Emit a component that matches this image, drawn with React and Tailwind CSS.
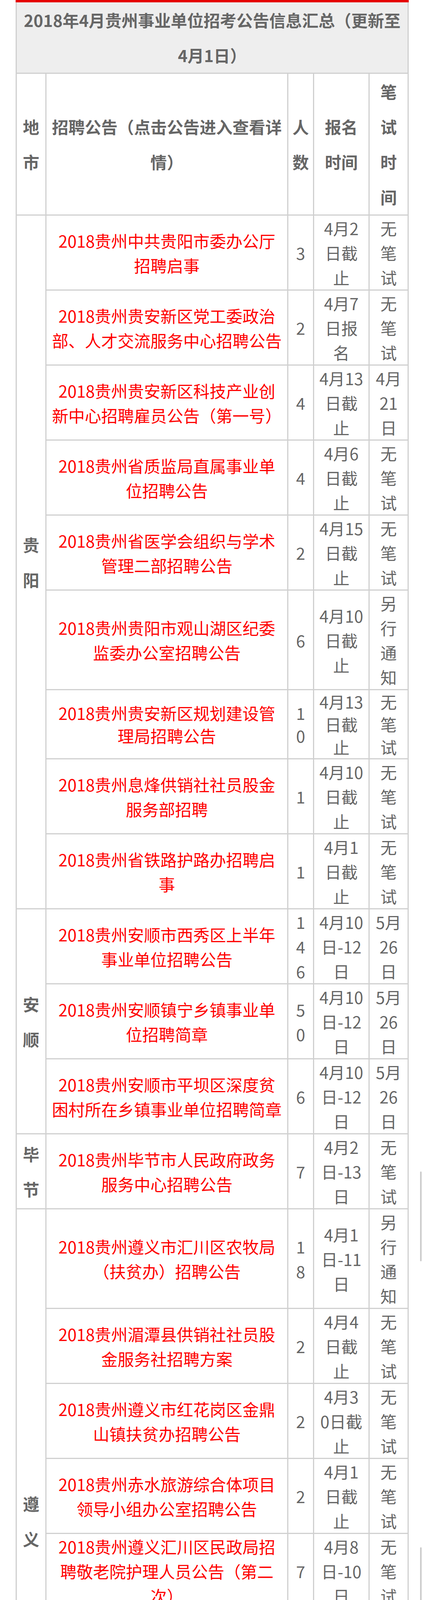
import React from "react";

// 各地区招聘公告（按截图中的换行写好）
const groups = [
  {
    region: "贵\n阳",
    rows: [
      { title: "2018贵州中共贵阳市委办公厅\n招聘启事", num: "3", date: "4月2\n日截\n止" },
      { title: "2018贵州贵安新区党工委政治\n部、人才交流服务中心招聘公告", num: "2", date: "4月7\n日报\n名" },
      { title: "2018贵州贵安新区科技产业创\n新中心招聘雇员公告（第一号）", num: "4", date: "4月13\n日截\n止", exam: "4月\n21\n日" },
      { title: "2018贵州省质监局直属事业单\n位招聘公告", num: "4", date: "4月6\n日截\n止" },
      { title: "2018贵州省医学会组织与学术\n管理二部招聘公告", num: "2", date: "4月15\n日截\n止" },
      { title: "2018贵州贵阳市观山湖区纪委\n监委办公室招聘公告", num: "6", date: "4月10\n日截\n止", exam: "另\n行\n通\n知" },
      { title: "2018贵州贵安新区规划建设管\n理局招聘公告", num: "1\n0", date: "4月13\n日截\n止", lh: "leading-[58px]" },
      { title: "2018贵州息烽供销社社员股金\n服务部招聘", num: "1", date: "4月10\n日截\n止" },
      { title: "2018贵州省铁路护路办招聘启\n事", num: "1", date: "4月1\n日截\n止" },
    ],
  },
  {
    region: "安\n顺",
    rows: [
      { title: "2018贵州安顺市西秀区上半年\n事业单位招聘公告", num: "1\n4\n6", date: "4月10\n日-12\n日", exam: "5月\n26\n日" },
      { title: "2018贵州安顺镇宁乡镇事业单\n位招聘简章", num: "5\n0", date: "4月10\n日-12\n日", exam: "5月\n26\n日" },
      { title: "2018贵州安顺市平坝区深度贫\n困村所在乡镇事业单位招聘简章", num: "6", date: "4月10\n日-12\n日", exam: "5月\n26\n日" },
    ],
  },
  {
    region: "毕\n节",
    rows: [
      { title: "2018贵州毕节市人民政府政务\n服务中心招聘公告", num: "7", date: "4月2\n日-13\n日" },
    ],
  },
  {
    region: "遵\n义",
    rows: [
      { title: "2018贵州遵义市汇川区农牧局\n（扶贫办）招聘公告", num: "1\n8", date: "4月1\n日-11\n日", exam: "另\n行\n通\n知" },
      { title: "2018贵州湄潭县供销社社员股\n金服务社招聘方案", num: "2", date: "4月4\n日截\n止" },
      { title: "2018贵州遵义市红花岗区金鼎\n山镇扶贫办招聘公告", num: "2", date: "4月3\n0日截\n止" },
      { title: "2018贵州赤水旅游综合体项目\n领导小组办公室招聘公告", num: "2", date: "4月1\n日截\n止" },
      { title: "2018贵州遵义汇川区民政局招\n聘敬老院护理人员公告（第二\n次）", num: "7", date: "4月8\n日-10\n日" },
      { title: "2018贵州遵义绥阳县电视台招\n聘简章", num: "2", date: "4月9\n日-12\n日" },
      { title: "2018贵州省产品质量监督检验\n院仁怀分院招考方案", num: "1", date: "4月4\n日截\n止", exam: "4月\n6日" },
      { title: "2018贵州遵义师范学院招聘简\n章", num: "5\n7", date: "全年\n有效" },
    ],
  },
  {
    region: "铜\n仁",
    rows: [
      { title: "2018贵州石阡县中坝街道招聘\n公益性岗位方案", num: "2", date: "4月1\n日报\n名" },
      { title: "2018贵州玉屏侗族自治县两违\n整治办公室招聘公告", num: "1", date: "4月3\n日截\n止" },
      { title: "2018贵州玉屏侗族自治县司法\n局招聘公告", num: "3", date: "4月21\n日截\n止" },
      { title: "2018贵州德江县委德江县人民\n政府招聘公告", num: "1\n0", date: "4月10\n日截\n止" },
      { title: "2018贵州铜仁市碧江区城乡消\n费合作社招聘", num: "若\n干", date: "4月2\n0日截\n止" },
      { title: "2018贵州铜仁市碧江区事业单\n位招聘（引进）人才简章", num: "7\n8", date: "4月10\n日截\n止" },
    ],
  },
  {
    region: "六\n盘\n水",
    rows: [
      { title: "2018贵州六盘水市钟山区招聘\n公告", num: "2", date: "4月5\n日截\n止" },
    ],
  },
  {
    region: "黔\n南\n州",
    rows: [
      { title: "2018贵州平塘县塘招聘村级文\n书简章", num: "1\n0", date: "4月1\n日截\n止", exam: "4月\n15\n日", lh: "leading-[61px]" },
      { title: "2018贵州都匀市住房和城乡建\n设局招聘启事", num: "2", date: "4月10\n日截\n止" },
    ],
  },
  {
    region: "黔\n东\n南",
    rows: [
      { title: "2018贵州从江县招聘扶贫工作\n人员方案", num: "1\n0\n0", date: "4月8\n日-13\n日" },
    ],
  },
];

const cell = "border-[3px] border-[#d0d0d0] p-0 text-center align-middle whitespace-pre";
const head = `${cell} font-bold leading-[90px] text-[#666]`;

const App = () => {
  return (
    <div className="relative bg-white w-[1080px] font-['Noto_Sans_CJK_SC',sans-serif] text-[42px] text-[#666]">
      <table className="ml-[40px] w-[1003px] table-fixed border-collapse">
        <colgroup>
          <col className="w-[76px]" />
          <col className="w-[619px]" />
          <col className="w-[66px]" />
          <col className="w-[142px]" />
          <col className="w-[100px]" />
        </colgroup>
        <thead>
          <tr>
            <th
              colSpan={5}
              className={`${head} bg-[#eeeeee] border-t-[6px] border-t-[#e60000]`}
            >
              {"2018年4月贵州事业单位招考公告信息汇总（更新至\n4月1日）"}
            </th>
          </tr>
          <tr>
            <th className={head}>{"地\n市"}</th>
            <th className={head}>{"招聘公告（点击公告进入查看详\n情）"}</th>
            <th className={head}>{"人\n数"}</th>
            <th className={head}>{"报名\n时间"}</th>
            <th className={head}>{"笔\n试\n时\n间"}</th>
          </tr>
        </thead>
        <tbody>
          {groups.map((g) =>
            g.rows.map((r, i) => {
              const lh = r.lh || "leading-[63px]";
              return (
                <tr key={g.region + i}>
                  {i === 0 && (
                    <td rowSpan={g.rows.length} className={head}>
                      {g.region}
                    </td>
                  )}
                  <td className={`${cell} ${lh}`}>
                    <a href="#" className="text-[#ff0000] no-underline">
                      {r.title}
                    </a>
                  </td>
                  <td className={`${cell} ${lh}`}>{r.num}</td>
                  <td className={`${cell} ${lh}`}>{r.date}</td>
                  <td className={`${cell} ${lh}`}>{r.exam || "无\n笔\n试"}</td>
                </tr>
              );
            })
          )}
          {/* 合计 */}
          <tr>
            <td className={`${cell} leading-[63px]`}></td>
            <td className={`${cell} font-bold leading-[63px]`}>合计</td>
            <td className={`${cell} leading-[63px]`}>{"5\n4\n1"}</td>
            <td className={`${cell} leading-[63px]`}></td>
            <td className={`${cell} leading-[63px]`}></td>
          </tr>
        </tbody>
      </table>

      {/* 截图里右侧的滚动条痕迹 */}
      <div className="absolute left-[1075px] top-[2999px] h-[230px] w-[4px] rounded-full bg-[#cccccc]" />
      <div className="absolute left-[1075px] top-[3961px] h-[229px] w-[4px] rounded-full bg-[#cccccc]" />
      <div className="absolute left-[1075px] top-[4921px] h-[233px] w-[4px] rounded-full bg-[#cccccc]" />
    </div>
  );
};

export default App;
